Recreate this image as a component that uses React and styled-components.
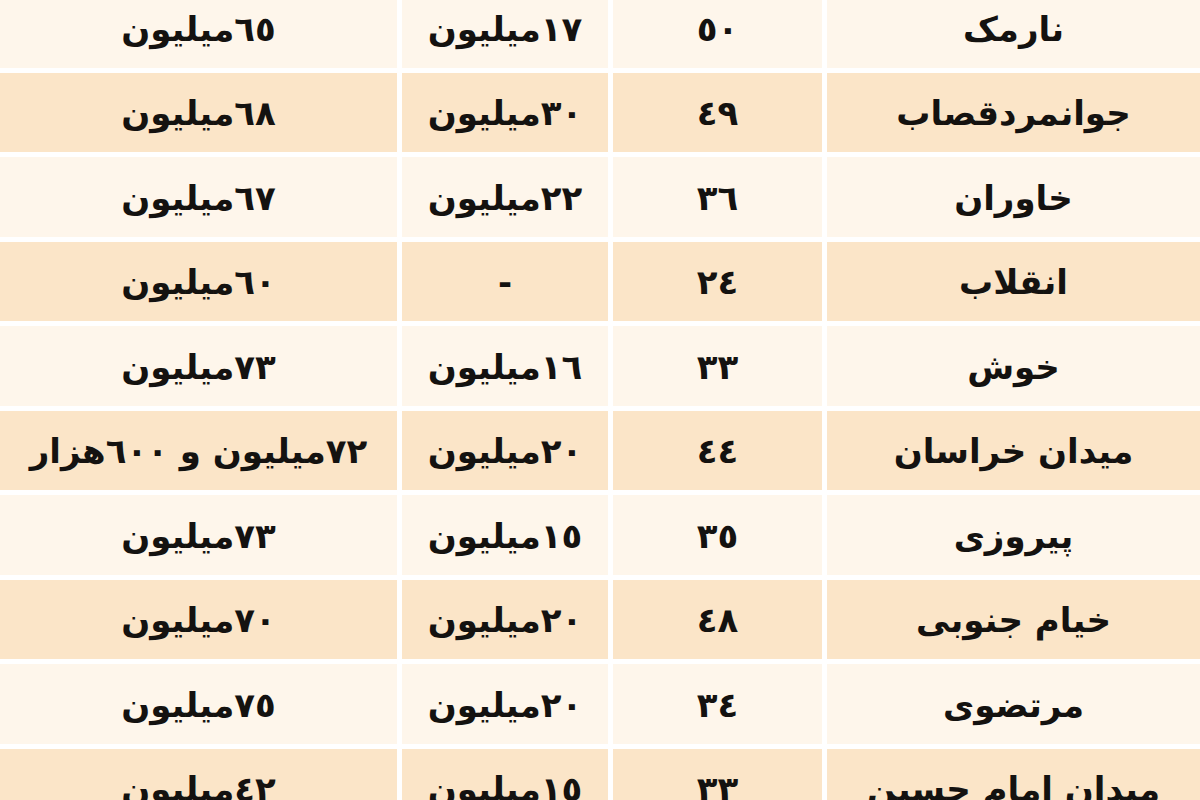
import React from "react";
import styled, { createGlobalStyle } from "styled-components";

const Global = createGlobalStyle`
  html, body {
    margin: 0;
    padding: 0;
    background: #ffffff;
    overflow: hidden;
  }
  body {
    width: 1200px;
    height: 800px;
  }
`;

const Table = styled.div`
  direction: rtl;
  display: flex;
  flex-direction: column;
  gap: 5px;
  margin-top: -12px;
  width: 1200px;
  background: #ffffff;
  font-family: "DejaVu Sans", "Noto Sans", sans-serif;
  font-weight: bold;
  color: #141210;
`;

const Row = styled.div`
  display: grid;
  grid-template-columns: 373px 209px 206px 1fr;
  column-gap: 5px;
  height: 79.5px;
`;

const Cell = styled.div`
  display: flex;
  align-items: center;
  justify-content: center;
  background: ${(p) => (p.$shade ? "#fbe5c8" : "#fef6eb")};
  font-size: 34px;
  line-height: 1;
  white-space: nowrap;
  padding-top: 2px;
`;

const rows = [
  ["نارمک", "٥٠", "١٧میلیون", "٦٥میلیون"],
  ["جوانمردقصاب", "٤٩", "٣٠میلیون", "٦٨میلیون"],
  ["خاوران", "٣٦", "٢٢میلیون", "٦٧میلیون"],
  ["انقلاب", "٢٤", "-", "٦٠میلیون"],
  ["خوش", "٣٣", "١٦میلیون", "٧٣میلیون"],
  ["میدان خراسان", "٤٤", "٢٠میلیون", "٧٢میلیون و ٦٠٠هزار"],
  ["پیروزی", "٣٥", "١٥میلیون", "٧٣میلیون"],
  ["خیام جنوبی", "٤٨", "٢٠میلیون", "٧٠میلیون"],
  ["مرتضوی", "٣٤", "٢٠میلیون", "٧٥میلیون"],
  ["میدان امام حسین", "٣٣", "١٥میلیون", "٤٢میلیون"],
];

export default function App() {
  return (
    <>
      <Global />
      <Table>
        {rows.map((r, i) => (
          <Row key={i}>
            {r.map((c, j) => (
              <Cell key={j} $shade={i % 2 === 1}>
                {c}
              </Cell>
            ))}
          </Row>
        ))}
      </Table>
    </>
  );
}
